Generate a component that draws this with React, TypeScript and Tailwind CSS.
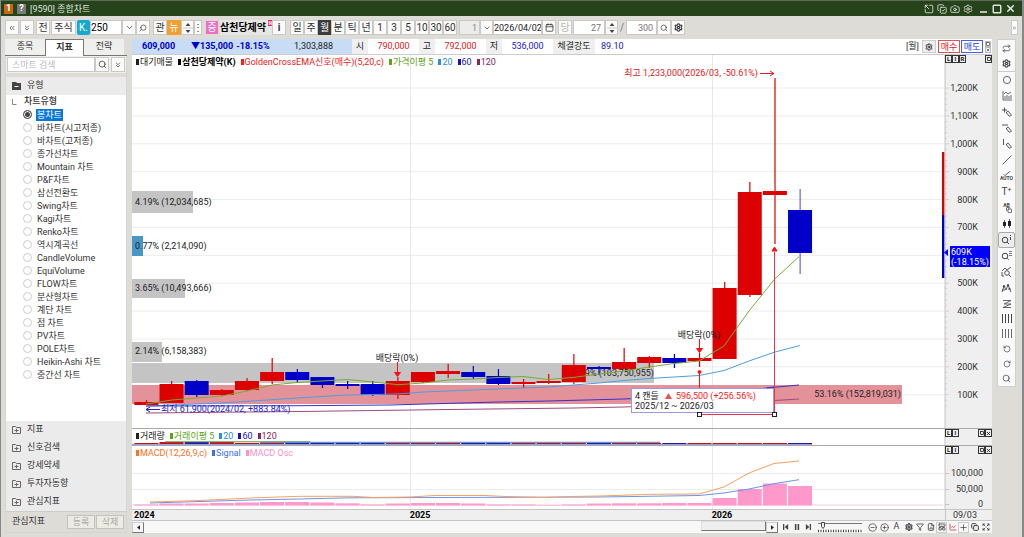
import React from "react";
import {
  Calendar,
  Camera,
  ChartLine,
  ChevronDown,
  ChevronsDown,
  ChevronsLeft,
  ChevronsRight,
  CircleMinus,
  CirclePlus,
  Copy,
  CopyCheck,
  Expand,
  FileChartColumn,
  Filter,
  LayoutPanelTop,
  Plus,
  Repeat,
  RotateCcw,
  RotateCw,
  Search,
  Settings,
  Slash,
  Square,
  SquareArrowOutUpLeft,
  X,
} from "lucide-react";

const y = (price: number) => 422.6 - price * 0.2788;
const cx = (i: number) => 146.4 + i * 25.14;

// [direction, body top, body bottom, wick top, wick bottom]
const candles: [string, number, number, number, number][] = [
  ["r", 402, 405, 400, 405],
  ["r", 384, 403, 381, 403],
  ["b", 381, 395, 380, 397],
  ["r", 390, 395, 389, 396],
  ["r", 381, 390, 378, 391],
  ["r", 372, 381, 358, 384],
  ["b", 372, 380, 369, 383],
  ["b", 377, 385, 377, 388],
  ["b", 384, 386, 381, 389],
  ["b", 384, 395, 381, 396],
  ["r", 381, 395, 377, 399],
  ["r", 372, 382, 372, 383],
  ["r", 371, 374, 364, 378],
  ["b", 372, 377, 366, 379],
  ["b", 376, 384, 369, 385],
  ["r", 382, 384, 379, 388],
  ["r", 381, 383, 374, 384],
  ["r", 365, 382, 354, 384],
  ["b", 367, 369, 366, 375],
  ["r", 362, 369, 348, 369],
  ["r", 357, 363, 356, 368],
  ["b", 358, 363, 354, 368],
  ["r", 358, 361, 353, 367],
  ["r", 288, 359, 282, 359],
  ["r", 192, 295, 182, 297],
  ["r", 191, 195, 78, 244],
  ["b", 210, 253, 189, 274],
];

const ma5 =
  "146,404 172,400 197,398 222,396 247,391 272,385 297,382.5 322,381 347,379.5 373,382 398,384.7 423,383 448,380 473,379 498,377.5 523,376.5 548,379.5 573,377.5 599,374 624,371 649,367 674,363.5 699,361 724,346 749,311 775,278.7 799,256.7";
const ma20 =
  "146,406 222,403 297,398 347,395 398,394 423,392 473,390 548,387 599,383 624,380.5 649,378.5 699,375.5 724,370.5 749,361 775,352 800,345.5";
const ma60 = "146,406 300,405.7 390,405 498,402 548,401 624,399 699,395 767,388 799,385";
const ma120 = "146,413 300,411.5 448,409.5 574,408 624,407 775,400.5 799,399";
const macd =
  "150,502 200,500.5 250,498 300,496.3 353,496.3 373,497.5 410,497 435,495.5 485,495.5 505,496.5 545,497.5 570,496.5 600,496 650,494.3 699,494 724,487 749,473 774,463.5 799,461";
const signal = "150,503 250,500 300,499 350,497.8 600,497 699,495.5 724,493 749,489 775,483.5 799,479.7";
const oscTop = [504.5, 503.5, 503.5, 503, 502.5, 502, 502, 502.5, 503.3, 504.5, 503.5, 503, 503, 503.5, 504.5, 504.5, 505, 504.5, 503.5, 503.3, 503.3, 503, 503, 498, 489, 483.5, 486];

const box =
  "flex h-[15px] shrink-0 items-center justify-center border border-[#c9c9c6] bg-[#fafafa] text-[#333]";

function Tb({ children, className = "w-[14px]", label }: { children: React.ReactNode; className?: string; label?: string }) {
  return (
    <button aria-label={label} className={`${box} ${className}`}>
      {children}
    </button>
  );
}

function Spinner({ label }: { label: string }) {
  return (
    <button aria-label={label} className={`${box} w-[13px]`}>
      <svg viewBox="0 0 10 12" className="h-3 w-2.5" fill="#444">
        <path d="M5 1 7.5 4h-5zM5 11 7.5 8h-5z" />
        <path d="M0 5.6h10v.8H0z" fill="#bbb" />
      </svg>
    </button>
  );
}

function TitleBar() {
  return (
    <header className="flex h-4 items-center gap-1 border-t border-[#5b6b54] bg-[#26431b] pr-[6px] pl-[3px] text-[#dfe5dc]">
      <span className="flex h-[10px] w-[9px] items-center justify-center bg-[#c56a12] text-[9px] font-bold text-white">1</span>
      <span className="flex h-[10px] w-[9px] items-center justify-center bg-[#7b7b7b] text-[9px] font-bold text-white">?</span>
      <h1 className="text-[9px] leading-[14px]">[9590] 종합차트</h1>
      <div className="ml-auto flex items-center gap-[3px]">
        <button aria-label="분리"><SquareArrowOutUpLeft size={10} /></button>
        <button aria-label="복사"><CopyCheck size={10} /></button>
        <button aria-label="캡처"><Camera size={10} /></button>
        <button aria-label="설정"><Settings size={10} /></button>
        <button aria-label="최소화" className="ml-[3px]"><svg viewBox="0 0 10 10" className="h-[10px] w-[10px]"><path d="M1 8h7" stroke="currentColor" strokeWidth="1.6" /></svg></button>
        <button aria-label="최대화"><Square size={10} strokeWidth={3.5} /></button>
        <button aria-label="닫기"><X size={11} strokeWidth={3.5} /></button>
      </div>
    </header>
  );
}

function Toolbar() {
  return (
    <div className="flex h-[23px] items-center pl-1 text-[10px]">
      <div className="flex items-center gap-px">
        <Tb label="이전"><ChevronsLeft size={8} /></Tb>
        <Tb label="아래"><ChevronsDown size={8} /></Tb>
        <Tb className="ml-px w-[14px]">전</Tb>
        <Tb className="w-[25px]">주식</Tb>
        <button className="flex h-[15px] w-[13px] shrink-0 items-center justify-center rounded-[2px] bg-[#14a9cf] text-[10px] text-white">K.</button>
      </div>
      <input aria-label="종목코드" defaultValue="250" className="h-[15px] w-8 border border-[#c9c9c6] bg-white px-0 text-[10px]" />
      <Tb label="종목 목록"><ChevronDown size={9} /></Tb>
      <Tb label="종목 검색"><Search size={8} className="-scale-x-100" /></Tb>
      <div className="ml-[3px] flex items-center">
        <Tb>관</Tb>
        <button className="flex h-[15px] w-[14px] shrink-0 items-center justify-center bg-[#f0a030] text-white">뉴</button>
        <Spinner label="종목 이동" />
        <Tb label="더보기" className="w-[8px]">⋮</Tb>
      </div>
      <span className="ml-1 flex h-[13px] w-[12px] shrink-0 items-center justify-center bg-[#ee6cc4] text-white">증</span>
      <span className="relative ml-[2px] w-[52px] shrink-0 bg-[#e6e6e4] text-[10px] leading-[15px] font-bold whitespace-nowrap text-black">
        삼천당제약
        <sup className="absolute top-0 right-0 bg-[#e62060] text-[5px] leading-[6px] text-white">N</sup>
      </span>
      <Tb className="w-[14px] font-bold">i</Tb>
      <div className="ml-1 flex items-center">
        <Tb>일</Tb>
        <Tb>주</Tb>
        <button className="flex h-[15px] w-[13px] shrink-0 items-center justify-center bg-[#3b3b3b] text-white">월</button>
        <Tb>분</Tb>
        <Tb>틱</Tb>
        <Tb>년</Tb>
      </div>
      <div className="flex items-center">
        <Tb>1</Tb>
        <Tb>3</Tb>
        <Tb>5</Tb>
        <Tb>10</Tb>
        <Tb>30</Tb>
        <Tb>60</Tb>
      </div>
      <input aria-label="주기" defaultValue="1" className="ml-[2px] h-[15px] w-[21px] border border-[#c9c9c6] bg-[#ececea] pr-[2px] text-right text-[9px] text-[#888]" />
      <Tb label="주기 선택" className="w-[13px]"><ChevronDown size={8} /></Tb>
      <input aria-label="날짜" defaultValue="2026/04/02" className="h-[15px] w-[49px] border border-[#c9c9c6] bg-white text-center text-[9px] text-[#222]" />
      <Tb label="달력"><Calendar size={9} /></Tb>
      <button className={`${box} ml-[2px] w-[14px] !text-[#b9b9b0]`}>당</button>
      <input aria-label="표시 개수" defaultValue="27" className="ml-px h-[15px] w-8 border border-[#c9c9c6] bg-white pr-[3px] text-right text-[9px] text-[#777]" />
      <Spinner label="표시 개수 조정" />
      <span className="mx-[2px] text-[#777]">/</span>
      <input aria-label="전체 개수" defaultValue="300" className="h-[15px] w-[31px] border border-[#c9c9c6] bg-white pr-[3px] text-right text-[9px] text-[#777]" />
      <Tb label="확대"><Search size={8} /></Tb>
      <Tb label="차트 설정"><Settings size={9} strokeWidth={3} /></Tb>
      <Tb label="펼치기" className="mr-1 ml-auto w-[7px]"><ChevronsRight size={6} /></Tb>
    </div>
  );
}

const types = [
  "봉차트", "바차트(시고저종)", "바차트(고저종)", "종가선차트", "Mountain 차트", "P&F차트", "삼선전환도", "Swing차트",
  "Kagi차트", "Renko차트", "역시계곡선", "CandleVolume", "EquiVolume", "FLOW차트", "분산형차트", "계단 차트",
  "점 차트", "PV차트", "POLE차트", "Heikin-Ashi 차트", "중간선 차트",
];

function FolderIcon() {
  return (
    <svg viewBox="0 0 9 8" className="h-2 w-[9px] shrink-0" fill="none" stroke="#666" strokeWidth="1">
      <path d="M.5.5h3l1 1h4v6h-8zM2.5 4.5h4M4.500 2.800v3.500" />
    </svg>
  );
}

function Sidebar() {
  return (
    <aside className="flex w-[122px] shrink-0 flex-col text-[#333]">
      <div className="flex h-[17px] text-[9px]">
        <button className="w-10 border-b border-[#777] bg-[#efefee]">종목</button>
        <button className="w-[39px] border-x border-t border-[#777] bg-white font-bold">지표</button>
        <button className="w-10 border-b border-[#777] bg-[#efefee]">전략</button>
        <span className="flex-1 border-b border-[#777]" />
      </div>
      <div className="flex flex-1 flex-col border border-t-0 border-[#d5d5d2] bg-white">
        <div className="flex h-[21px] items-center border-b-4 border-[#dddcd6] bg-[#f0f0ee] px-px">
          <input aria-label="스마트 검색" placeholder="스마트 검색" className="h-[15px] min-w-0 flex-1 border border-[#c9c9c6] bg-white px-1 text-[9px] placeholder:text-[#bbb]" />
          <Tb label="검색"><Search size={9} /></Tb>
          <Tb label="접기" className="ml-[2px] w-[14px]"><ChevronsDown size={8} /></Tb>
        </div>
        <button className="flex h-[18px] items-center gap-[6px] bg-[#ebebeb] px-[6px] text-[9px]">
          <svg viewBox="0 0 9 8" className="h-2 w-[9px]"><path d="M0 0h4l1 1h4v7H0z" fill="#444" /><path d="M2.500 4.500h4" stroke="#fff" /></svg>
          유형
        </button>
        <fieldset className="flex-1 pb-4">
          <legend className="flex h-[13px] items-center gap-[7px] pl-[6px] text-[9px] leading-[13px] font-medium">
            <svg viewBox="0 0 5 6" className="h-[6px] w-[5px]" fill="none" stroke="#888"><path d="M.5 0v5.500h4" /></svg>
            차트유형
          </legend>
          {types.map((t, i) => (
            <label key={t} className="flex h-[13px] items-center gap-1 pl-[17px] text-[9px] leading-3">
              <input
                type="radio"
                name="chart-type"
                defaultChecked={i === 0}
                className="h-[9px] w-[9px] appearance-none rounded-full border border-[#ccc] bg-white checked:border-[#555] checked:bg-[#444] checked:shadow-[inset_0_0_0_1px_#fff]"
              />
              <span className={i === 0 ? "bg-[#0a78d7] px-px text-white" : "px-px whitespace-nowrap"}>{t}</span>
            </label>
          ))}
        </fieldset>
        <nav className="bg-[#ebebeb]">
          {["지표", "신호검색", "강세약세", "투자자동향", "관심지표"].map((t) => (
            <button key={t} className="flex h-[18px] w-full items-center gap-[6px] px-[6px] text-[9px]">
              <FolderIcon />
              {t}
            </button>
          ))}
        </nav>
        <div className="flex h-[21px] items-center gap-px border-t border-[#ccc] bg-[#dddcd6] pr-[2px] pl-[6px] text-[9px]">
          <span className="mr-auto">관심지표</span>
          <button className="h-[14px] w-7 border border-[#c4c3bb] bg-[#ecebe6] leading-3 text-[#aaa99f]">등록</button>
          <button className="h-[14px] w-7 border border-[#c4c3bb] bg-[#ecebe6] leading-3 text-[#aaa99f]">삭제</button>
        </div>
      </div>
    </aside>
  );
}

function InfoBar() {
  const lab = "flex h-full items-center bg-[#efefef] px-[6px] text-[#222]";
  return (
    <div className="flex h-4 items-center border-b border-[#ccc] bg-white text-[9px]">
      <div className="flex h-full w-[220px] items-center bg-[#c9dcf5] pl-[10px] font-bold text-[#0000cc]">
        <span className="w-[49px]">609,000</span>
        <span>▼135,000</span>
        <span className="ml-[3px]">-18.15%</span>
        <span className="mr-[19px] ml-auto font-normal text-[#222]">1,303,888</span>
      </div>
      <span className={`${lab} w-4 justify-center`}>시</span>
      <span className="w-[51px] text-center text-[#e02020]">790,000</span>
      <span className={`${lab} w-4 justify-center`}>고</span>
      <span className="w-[51px] text-center text-[#e02020]">792,000</span>
      <span className={`${lab} w-4 justify-center`}>저</span>
      <span className="w-[51px] text-center text-[#2020cc]">536,000</span>
      <span className="flex h-full w-[42px] items-center justify-center bg-[#efefef] text-[#222]">체결강도</span>
      <span className="ml-[6px] text-[#2020cc]">89.10</span>
      <div className="ml-auto flex items-center gap-px text-[#333]">
        <span className="mr-[2px]">[월]</span>
        <button aria-label="설정" className="flex h-[13px] w-[14px] items-center justify-center border border-[#ccc] bg-[#eee]"><Settings size={8} strokeWidth={3} /></button>
        <button className="ml-px h-[13px] w-[22px] border border-[#e05050] leading-[10px] text-[#e02020]">매수</button>
        <button className="h-[13px] w-[22px] border border-[#4060e0] leading-[10px] text-[#2040e0]">매도</button>
        <div className="ml-px flex flex-col pr-px">
          <button aria-label="확대" className="border border-[#bbb]"><Square size={4} strokeWidth={4} /></button>
          <button aria-label="닫기" className="border border-[#bbb]"><X size={4} strokeWidth={4} /></button>
        </div>
      </div>
    </div>
  );
}

function Legend({ items }: { items: [string, string, string?][] }) {
  return (
    <div className="absolute top-px left-1 flex items-center text-[9px] leading-3 whitespace-nowrap">
      {items.map(([color, text, extra]) => (
        <span key={text} className={`mr-[5px] flex items-center gap-px ${color} ${extra ?? ""}`}>
          <span className="h-[6px] w-[3px] bg-current" />
          {text}
        </span>
      ))}
    </div>
  );
}

const mini = "flex h-2 w-[7px] items-center justify-center border border-[#333] bg-[#eee] text-[6px] leading-none font-bold text-[#222]";

function PaneButtons({ left, right }: { left: string[]; right: string[] }) {
  return (
    <div className="absolute top-0 right-0 flex w-[47px] justify-between">
      <div className="flex">{left.map((t) => <button key={t} className={mini}>{t}</button>)}</div>
      <div className="flex">
        {right.map((t) => (
          <button key={t} aria-label={t} className={mini}>
            {t === "닫기" ? <X size={5} strokeWidth={4} /> : <Square size={4} strokeWidth={5} />}
          </button>
        ))}
      </div>
    </div>
  );
}

function PricePane() {
  const grid = Array.from({ length: 12 }, (_, i) => (i + 1) * 100);
  return (
    <section className="relative">
      <svg viewBox="132 55 860 373" className="block w-full bg-white text-[9px]" fontFamily="inherit">
        <rect x="945" y="55" width="47" height="373" fill="#efefef" />
        {grid.map((g) => <path key={g} d={`M132 ${y(g)}H944`} stroke="#ececec" />)}
        <path d="M410.500 55V428M712.500 55V428" stroke="#e8e8e8" />
        <g fill="#c4c4c4">
          <rect x="132" y="191" width="61" height="22" />
          <rect x="132" y="279" width="53" height="19" />
          <rect x="132" y="342" width="30" height="20" />
          <rect x="132" y="363" width="522" height="20" />
        </g>
        <rect x="132" y="236" width="11" height="20" fill="#4798c8" />
        <rect x="132" y="385" width="770" height="19" fill="#e4929a" />
        <g fill="#222">
          <text x="135" y="205">4.19% (12,034,685)</text>
          <text x="135" y="249">0.77% (2,214,090)</text>
          <text x="135" y="291">3.65% (10,493,666)</text>
          <text x="135" y="354">2.14% (6,158,383)</text>
          <text x="654" y="376" textAnchor="end">9% (103,750,955)</text>
          <text x="901" y="397" textAnchor="end">53.16% (152,819,031)</text>
          <text x="397" y="361" textAnchor="middle">배당락(0%)</text>
        </g>
        {candles.map(([d, t, b, h, l], i) => {
          const c = d === "r" ? "#dd0000" : "#0000c8";
          return (
            <g key={i} fill={c}>
              <rect x={cx(i) - 0.5} y={h} width="1.2" height={l - h} opacity={i === 26 ? 0.6 : 1} />
              <rect x={cx(i) - 12} y={t} width="24" height={b - t} />
            </g>
          );
        })}
        <text x="699" y="338" textAnchor="middle" fill="#222">배당락(0%)</text>
        <g fill="none">
          <polyline points={ma5} stroke="#76ab38" />
          <polyline points={ma20} stroke="#4c9fdd" />
          <polyline points={ma60} stroke="#3a30c8" />
          <polyline points={ma120} stroke="#9c4a80" />
        </g>
        <g fill="#ff1010" stroke="#ff1010">
          <path d="M397.500 362V372M699.500 339V348M699.500 373V388" fill="none" />
          <path d="M394.500 372.500h6l-3 4zM696.500 348.500h6l-3 4z" />
          <circle cx="699.500" cy="372" r="1.500" />
          <path d="M699 414.500H774.500V252" fill="none" stroke="#f03048" />
          <path d="M772 251l2.500-4 2.500 4z" />
        </g>
        <g fill="#2222cc">
          <text x="161" y="412">최저 61,900(2024/02, +883.84%)</text>
          <path d="M146 409.500H160M150 407l-4 2.500 4 2.500" fill="none" stroke="#2222cc" />
        </g>
        <g fill="#e02020">
          <text x="758" y="76" textAnchor="end">최고 1,233,000(2026/03, -50.61%)</text>
          <path d="M760 73.500H774M770 71l4 2.500-4 2.500" fill="none" stroke="#e02020" />
        </g>
        <rect x="631.500" y="388.500" width="142" height="24" fill="#fff" stroke="#9a9ae0" />
        <path d="M767 388L774 387" stroke="#3a30c8" />
        <text x="635" y="399" fill="#222">4 캔들</text>
        <path d="M665 399l3.500-6 3.500 6z" fill="#f05050" />
        <text x="676" y="399" fill="#ff2020">596,500 (+256.56%)</text>
        <text x="635" y="409" fill="#222">2025/12 ~ 2026/03</text>
        <g fill="#fff" stroke="#222">
          <rect x="697.500" y="412.500" width="4" height="4" />
          <rect x="772.500" y="412.500" width="4" height="4" />
        </g>
        <rect x="942" y="152" width="2.500" height="63" fill="#dd0000" />
        <rect x="942" y="215" width="2.500" height="63" fill="#0000c8" />
        <path d="M945 55V428" stroke="#c4c4c4" />
        {Array.from({ length: 58 }, (_, i) => (
          <path key={i} d={`M945 ${y(1200 - i * 20)}h${i % 5 === 0 ? 4 : 2}`} stroke="#c4c4c4" strokeWidth=".7" />
        ))}
        <g fill="#333" textAnchor="end">
          {grid.filter((g) => g !== 600).map((g) => (
            <text key={g} x="978" y={y(g) + 3}>{`${g.toLocaleString("en-US")}K`}</text>
          ))}
        </g>
        <path d="M944 252.500l4-3.500v7z" fill="#0000ff" />
        <rect x="950" y="246" width="40" height="21" fill="#0000ff" />
        <text x="951" y="255" fill="#fff">609K</text>
        <text x="951" y="265" fill="#fff">(-18.15%)</text>
      </svg>
      <Legend
        items={[
          ["text-[#222]", "대기매물"],
          ["text-black", "삼천당제약(K)", "font-bold"],
          ["text-[#f02020]", "GoldenCrossEMA신호(매수)(5,20,c)"],
          ["text-[#5aa518]", "가격이평 5"],
          ["text-[#2a90dc]", "20"],
          ["text-[#1515c0]", "60"],
          ["text-[#85285f]", "120"],
        ]}
      />
      <PaneButtons left={["L", "I", "R"]} right={["확대"]} />
    </section>
  );
}

function VolumePane() {
  return (
    <section className="relative border-t border-[#aaa]">
      <svg viewBox="132 429 860 16" className="block w-full bg-white">
        <path d="M410.500 429v16M712.500 429v16" stroke="#e8e8e8" />
        <rect x="945" y="429" width="47" height="16" fill="#efefef" />
        {candles.map(([d], i) => (
          <rect key={i} x={cx(i) - 12} y={i > 0 && i < 4 ? 442 : 443} width="24" height={i > 0 && i < 4 ? 2 : 1} fill={d === "r" ? "#c01020" : "#2018a8"} />
        ))}
        <path d="M165 441.800H310" stroke="#5a9a40" />
        <path d="M260 442.300H660" stroke="#3a80c8" />
        <path d="M132 444.500H812" stroke="#a0a0dc" />
        <path d="M945 429v16" stroke="#c4c4c4" />
      </svg>
      <Legend
        items={[
          ["text-[#222]", "거래량"],
          ["text-[#5aa518]", "거래이평 5"],
          ["text-[#2a90dc]", "20"],
          ["text-[#1515c0]", "60"],
          ["text-[#85285f]", "120"],
        ]}
      />
      <PaneButtons left={["L", "I"]} right={["확대", "닫기"]} />
    </section>
  );
}

function MacdPane() {
  return (
    <section className="relative border-t border-[#aaa]">
      <svg viewBox="132 446 860 63" className="block w-full bg-white text-[9px]">
        <path d="M132 473.500H944M132 489.500H944" stroke="#ececec" />
        <path d="M410.500 446v63M712.500 446v63" stroke="#e8e8e8" />
        <path d="M132 505H943" stroke="#ffc8e4" />
        {oscTop.map((t, i) => (
          <rect key={i} x={cx(i) - 12} y={t} width="24" height={505.500 - t} fill="#ff99cc" />
        ))}
        <polyline points={signal} fill="none" stroke="#6a94f0" />
        <polyline points={macd} fill="none" stroke="#f8a060" />
        <rect x="945" y="446" width="47" height="63" fill="#efefef" />
        <path d="M945 446v63M945 473.500h4M945 489.500h4M945 504.500h4" stroke="#c4c4c4" />
        <g fill="#333" textAnchor="end">
          <text x="983" y="476">100,000</text>
          <text x="983" y="492">50,000</text>
          <text x="983" y="507">0</text>
        </g>
      </svg>
      <Legend
        items={[
          ["text-[#ff7020]", "MACD(12,26,9,c)"],
          ["text-[#3a70f0]", "Signal"],
          ["text-[#ff90c8]", "MACD Osc"],
        ]}
      />
      <PaneButtons left={["L", "I"]} right={["확대", "닫기"]} />
    </section>
  );
}

function BottomBar() {
  const tool = "flex h-[11px] w-[11px] shrink-0 items-center justify-center";
  return (
    <div className="flex h-3 items-center bg-[#f6f6f6] pr-px text-[#444]">
      <button aria-label="왼쪽" className="flex h-[11px] w-3 items-center justify-center border border-[#ccc] border-r-[#777] border-b-[#777]">
        <svg viewBox="0 0 4 6" className="h-[5px] w-[3px]" fill="#222"><path d="M4 0v6L0 3z" /></svg>
      </button>
      <div className="h-full flex-1 bg-[#f8f8f8]">
        <div className="ml-auto h-[10px] w-[65px] border border-[#ddd] border-r-[#777] border-b-[#777] bg-[#efefef]" />
      </div>
      <button aria-label="오른쪽" className="flex h-[11px] w-3 items-center justify-center border border-[#ccc] border-r-[#777] border-b-[#777]">
        <svg viewBox="0 0 4 6" className="h-[5px] w-[3px]" fill="#222"><path d="M0 0v6l4-3z" /></svg>
      </button>
      <div className="ml-[2px] flex">
        <button aria-label="처음" className="flex w-[11px] justify-center"><svg viewBox="0 0 7 7" className="h-[6px] w-[6px]" fill="#444"><path d="M0 0h1.500v7H0zM6 0v7L2 3.500z" /></svg></button>
        <button aria-label="일시정지" className="flex w-[11px] justify-center"><svg viewBox="0 0 7 7" className="h-[6px] w-[6px]" fill="#444"><path d="M1 0h1.800v7H1zM4.200 0H6v7H4.200z" /></svg></button>
        <button aria-label="마지막" className="flex w-[11px] justify-center"><svg viewBox="0 0 7 7" className="h-[6px] w-[6px]" fill="#444"><path d="M5.500 0H7v7H5.500zM1 0v7l4-3.500z" /></svg></button>
      </div>
      <div className="relative mx-1 h-[11px] w-[46px]">
        <svg viewBox="0 0 46 11" className="block h-full w-full">
          <path d="M1 1.500h44" stroke="#777" />
          <path d="M1 9h44" stroke="#444" strokeWidth="2.500" strokeDasharray="1 1.500" />
          <path d="M4.500 .5h3v4L6 6.500l-1.500-2z" fill="#eee" stroke="#444" />
        </svg>
        <input type="range" aria-label="배율" defaultValue={10} className="absolute inset-0 h-full w-full opacity-0" />
      </div>
      <div className="flex items-center gap-px">
        <button aria-label="축소" className={tool}><CircleMinus size={9} /></button>
        <button aria-label="확대" className={tool}><CirclePlus size={9} /></button>
        <button className={`${tool} text-[9px]`}>A</button>
        <button aria-label="설정" className={tool}><Settings size={8} strokeWidth={3.5} /></button>
      </div>
      <button aria-label="필터" className={tool}><Filter size={8} strokeWidth={2.5} /></button>
      <button aria-label="내보내기" className={tool}><FileChartColumn size={8} strokeWidth={2.5} /></button>
      <button aria-label="분할" className={`${tool} border border-[#ccc]`}><LayoutPanelTop size={8} strokeWidth={2.5} /></button>
      <button aria-label="차트" className={`${tool} text-[#c04040]`}><ChartLine size={8} strokeWidth={2.5} /></button>
      <button aria-label="십자선" className={`${tool} border border-[#ccc]`}><Plus size={9} /></button>
      <button aria-label="복사" className={tool}><Copy size={8} strokeWidth={3} /></button>
      <button aria-label="전체화면" className={tool}><Expand size={8} strokeWidth={2.5} /></button>
    </div>
  );
}

const pen = <path d="M5.500 5l1.500-1 3 3.500c.5 1.500-1 2-2 1.500L5.500 6z" />;

const tools: [string, React.ReactNode][] = [
  ["새로고침", <Repeat size={9} />],
  ["설정", <Settings size={9} strokeWidth={3} />],
  ["원", <svg viewBox="0 0 10 10" className="h-[10px] w-[10px]" fill="none" stroke="currentColor" strokeWidth=".8"><circle cx="5" cy="5" r="3.600" /></svg>],
  ["지표", <svg viewBox="0 0 10 10" className="h-[10px] w-[10px]" fill="none" stroke="currentColor" strokeWidth=".8"><path d="M1 0v9h9M2 3l2-2 2 2 3-2M3 8V5M5 8V4M7 8V5M9 8V4" /></svg>],
  ["추세선 추가", <svg viewBox="0 0 11 10" className="h-[10px] w-[11px]" fill="none" stroke="currentColor" strokeWidth=".9"><path d="M1 3h5M3.500.500v5" />{pen}</svg>],
  ["수평선", <svg viewBox="0 0 11 10" className="h-[10px] w-[11px]" fill="none" stroke="currentColor" strokeWidth=".9"><path d="M1 2h6" />{pen}</svg>],
  ["수직선", <svg viewBox="0 0 11 10" className="h-[10px] w-[11px]" fill="none" stroke="currentColor" strokeWidth=".9"><path d="M2.500 0v6" />{pen}</svg>],
  ["선", <Slash size={10} strokeWidth={2} />],
  ["자동 추세선", <span className="flex flex-col items-center text-[5px] leading-[5px] font-bold"><svg viewBox="0 0 10 6" className="h-[5px] w-[10px]" fill="none" stroke="currentColor"><path d="M1 4l1.500 1.500L9 0" /></svg>AUTO</span>],
  ["텍스트", <span className="text-[10px] leading-none">T<sup className="text-[7px]">+</sup></span>],
  ["도형", <span className="flex flex-col text-[5px] leading-[4px] font-bold">AB<Copy size={6} strokeWidth={3} className="ml-1" /></span>],
  ["캔들", <svg viewBox="0 0 10 10" className="h-[10px] w-[10px]" fill="#222"><path d="M1 3h3v4H1zM6 2h3v5H6zM2.200 1h.7v8h-.7zM7.200 0h.7v9h-.7z" /></svg>],
  ["구간 조회", <svg viewBox="0 0 11 10" className="h-[10px] w-[11px]" fill="none" stroke="currentColor"><circle cx="4" cy="5" r="2.800" /><path d="M6 7l2 2M9.500 0v1M9.500 2v3" /></svg>],
  ["목록 조회", <svg viewBox="0 0 11 10" className="h-[10px] w-[11px]" fill="none" stroke="currentColor"><circle cx="4" cy="5" r="2.800" /><path d="M6 7l2 2M8 .500h3M8 2.500h3M8 4.500h3" strokeWidth=".7" /></svg>],
  ["패턴", <svg viewBox="0 0 11 10" className="h-[10px] w-[11px]" fill="none" stroke="currentColor" strokeWidth=".9"><path d="M1 4l3-3 2 2 4-3M1 5v4h2" /><circle cx="6" cy="6" r="2.300" /><path d="M8 8l2 2" /></svg>],
  ["파동", <svg viewBox="0 0 11 10" className="h-[10px] w-[11px]" fill="none" stroke="currentColor" strokeWidth=".9"><path d="M1 9l2-6 2 4 2-5 3 7M2 4l1-2 1 2M6 3l1-2 1 2M1 7h3M7 6h3" /></svg>],
  ["지그재그", <svg viewBox="0 0 10 10" className="h-[10px] w-[10px]" fill="none" stroke="currentColor"><path d="M1 1.500h8M2 5h7M1 8.500h8M9 1.500L2 5M9 5L1 8.500" strokeWidth=".8" /></svg>],
  ["간격 3", <svg viewBox="0 0 10 10" className="h-[10px] w-[10px]" stroke="currentColor"><path d="M.5 0v9M3.500 0v9M6.500 0v9M9.500 0v9" /></svg>],
  ["간격 4", <svg viewBox="0 0 10 10" className="h-[10px] w-[10px]" stroke="currentColor"><path d="M.5 0v9M3.500 0v9M6.500 0v9M9.500 0v9" strokeWidth=".8" /></svg>],
  ["되돌리기", <RotateCcw size={8} />],
  ["다시하기", <RotateCw size={8} />],
  ["돋보기", <Search size={9} strokeWidth={2} />],
];

function ToolStrip() {
  return (
    <div className="mr-1 flex w-[19px] shrink-0 flex-col self-start border border-[#cfcfcc] bg-[#fafafa] text-[#444]">
      {tools.map(([name, icon], i) => (
        <button
          key={name}
          aria-label={name}
          className={
            i === 12
              ? "flex h-4 items-center justify-center rounded-[2px] border border-[#aaa] bg-[#eee]"
              : i === 1
                ? "flex h-4 items-center justify-center border-b border-[#ccc]"
                : i > 15
                  ? "flex h-[15px] items-center justify-center"
                  : "flex h-4 items-center justify-center"
          }
        >
          {icon}
        </button>
      ))}
    </div>
  );
}

export default function App() {
  return (
    <div className="flex min-h-screen flex-col border-r-2 border-l border-[#85898a] bg-[#dddcd6] font-['Liberation_Sans_Narrow',Roboto,'Noto_Sans_CJK_KR',sans-serif]">
      <TitleBar />
      <Toolbar />
      <main className="flex flex-1 pr-[2px] pb-1 pl-1">
        <Sidebar />
        <div className="ml-[5px] flex min-w-0 flex-1 flex-col">
          <InfoBar />
          <PricePane />
          <VolumePane />
          <MacdPane />
          <div className="flex h-3 border-y border-[#c4c4c4] bg-[#efefef] text-[9px] leading-[10px] font-bold text-black">
            <span className="w-[32.3%] pl-[2px]">2024</span>
            <span className="w-[35.1%]">2025</span>
            <span className="flex-1">2026</span>
            <span className="w-[47px] border-l border-[#c4c4c4] pl-[7px] font-normal text-[#333]">09/03</span>
          </div>
          <BottomBar />
        </div>
        <div className="w-[5px] shrink-0" />
        <ToolStrip />
      </main>
    </div>
  );
}
